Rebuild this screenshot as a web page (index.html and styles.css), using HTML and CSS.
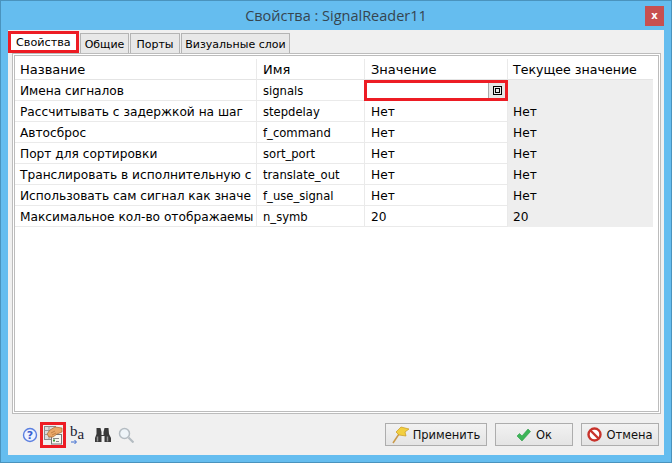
FILE: index.html
```html
<!DOCTYPE html>
<html lang="ru">
<head>
<meta charset="utf-8">
<title>Свойства : SignalReader11</title>
<link rel="stylesheet" href="styles.css">
</head>
<body>
<div class="window">
  <header class="titlebar">
    <span class="title">Свойства : SignalReader11</span>
    <button class="close" type="button">x</button>
  </header>
  <main class="client">
    <nav class="tabs">
      <span class="tab active">Свойства</span>
      <span class="tab t2">Общие</span>
      <span class="tab t3">Порты</span>
      <span class="tab t4">Визуальные слои</span>
    </nav>
    <section class="panel">
      <div class="grid">
        <div class="row head"><div class="c c1">Название</div><div class="c c2">Имя</div><div class="c c3">Значение</div><div class="c c4">Текущее значение</div></div>
        <div class="row"><div class="c c1">Имена сигналов</div><div class="c c2">signals</div><div class="c c3 editing"><span class="editor"></span><span class="dots"><svg class="ico" width="9" height="9" viewBox="0 0 9 9" shape-rendering="crispEdges"><path fill="#000" fill-rule="evenodd" d="M0 0h9v9H0ZM1 1v7h7V1Z"/><path fill="#000" fill-rule="evenodd" d="M2 2h5v5H2ZM3 3v3h3V3Z"/></svg></span></div><div class="c c4 cur"></div></div>
        <div class="row"><div class="c c1">Рассчитывать с задержкой на шаг</div><div class="c c2">stepdelay</div><div class="c c3">Нет</div><div class="c c4 cur">Нет</div></div>
        <div class="row"><div class="c c1">Автосброс</div><div class="c c2">f_command</div><div class="c c3">Нет</div><div class="c c4 cur">Нет</div></div>
        <div class="row"><div class="c c1">Порт для сортировки</div><div class="c c2">sort_port</div><div class="c c3">Нет</div><div class="c c4 cur">Нет</div></div>
        <div class="row"><div class="c c1">Транслировать в исполнительную с</div><div class="c c2">translate_out</div><div class="c c3">Нет</div><div class="c c4 cur">Нет</div></div>
        <div class="row"><div class="c c1">Использовать сам сигнал как значе</div><div class="c c2">f_use_signal</div><div class="c c3">Нет</div><div class="c c4 cur">Нет</div></div>
        <div class="row"><div class="c c1">Максимальное кол-во отображаемы</div><div class="c c2">n_symb</div><div class="c c3">20</div><div class="c c4 cur">20</div></div>
      </div>
    </section>
    <footer class="footer">
      <div class="tools">
        <svg class="ico" width="16" height="16" viewBox="0 0 16 16"><circle cx="8" cy="8" r="6.500" fill="#eef3ff" stroke="#5b7fe0" stroke-width="1.400"/><text x="8" y="12" class="q">?</text></svg>
        <span class="hl"><svg width="20" height="20" viewBox="0 0 20 20"><rect x="1.500" y="1.500" width="11" height="13" fill="#dcdcdc" stroke="#8a8a8a"/><path d="M1.500 5.500h11M1.500 9.500h11M6 1.500v13" stroke="#9a9a9a"/><rect x="8.500" y="9.500" width="10" height="9.500" fill="#f8f8f0" stroke="#777"/><path d="M10 13.500h6M13 16.500h3" stroke="#888"/><path d="M10 15.500h2" stroke="#3a9a3a" stroke-width="2"/><path d="M4 9 7 5 12 2 19 3 19 7 14 9 10 12 6 12Z" fill="#e9a868" stroke="#a8682e" stroke-width=".7"/><path d="M8 8l4-2M9 10l4-2" stroke="#a8682e" stroke-width=".6"/></svg></span>
        <span class="ba"><b>b</b>a<svg class="ba-arrow" width="8" height="5" viewBox="0 0 8 5"><path d="M0 2h5M3.500 0 5.500 2 3.500 4" fill="none" stroke="#3a6ad0"/></svg></span>
        <svg class="ico bin" width="17" height="16" viewBox="0 0 17 16"><path d="M2.500 1h4l1 4v3h2V5l1-4h4l.5 6 2 4v4h-6.500V9H7.500v6H1v-4l1.500-4Z" fill="#383838"/><path d="M3.500 9.500v5M13.500 9.500v5" stroke="#909090" stroke-width="1.500"/></svg>
        <svg class="ico mag" width="16" height="16" viewBox="0 0 16 16"><circle cx="6.500" cy="6.500" r="5" fill="#eef4f8" stroke="#b4bcc2" stroke-width="1.500"/><path d="M10.500 10.500l5 5" stroke="#b4bcc2" stroke-width="2.200"/></svg>
      </div>
      <div class="buttons">
        <button class="btn apply" type="button"><svg width="18" height="18" viewBox="0 0 18 18"><path d="M1 17 7 8" stroke="#c99a4a" stroke-width="1.500"/><path d="M4 6 9 1l8 2-4 3 1 4-7-1-3-3Z" fill="#f2cf40" stroke="#c99a20" stroke-width=".7"/></svg>Применить</button>
        <button class="btn ok" type="button"><svg width="15" height="14" viewBox="0 0 15 14"><path d="M1 8 3.500 5.500 6 8 12 1l2.500 2.500L6 13Z" fill="#3cb558" stroke="#2b9a45" stroke-width=".6"/></svg>Ок</button>
        <button class="btn cancel" type="button"><svg width="15" height="15" viewBox="0 0 15 15"><circle cx="7.500" cy="7.500" r="6" fill="#fff" stroke="#c8332c" stroke-width="2.400"/><path d="M3.500 3.500l8 8" stroke="#c8332c" stroke-width="2.400"/></svg>Отмена</button>
      </div>
    </footer>
  </main>
</div>
</body>
</html>
```
FILE: styles.css
```css
* { box-sizing: border-box; }
html, body { margin: 0; height: 100%; }
body { font: 12.200px "DejaVu Sans", sans-serif; color: #000; }
.window { width: 672px; height: 463px; background: #65bdef; border: 1px solid #4a93bd; padding: 0 7px 7px; display: flex; flex-direction: column; }
.titlebar { position: relative; height: 29px; flex: none; display: flex; align-items: center; justify-content: center; }
.title { font: 14.500px "Open Sans", sans-serif; color: #36454f; }
.close { position: absolute; right: 0; top: 5px; width: 19px; height: 20px; padding: 0; background: #c75050; border: 0; color: #fff; font: bold 10px "DejaVu Sans", sans-serif; line-height: 18px; }
.client { flex: 1; min-height: 0; background: #f0f0f0; display: flex; flex-direction: column; }
.tabs { display: flex; align-items: flex-end; height: 23px; flex: none; }
.tab { height: 20px; margin-right: 1px; background: #e8e8e8; border: 1px solid #b4b4b4; border-bottom: 0; font-size: 11px; line-height: 21px; text-align: center; white-space: nowrap; }
.t2 { width: 49px; }
.t3 { width: 50px; }
.t4 { width: 109px; }
.tab.active { height: 22px; width: 71px; background: #fff; border: 3px solid #ed1c24; padding: 0 0 0 5px; line-height: 18px; text-align: left; font-size: 11.200px; }
.panel { flex: none; height: 361px; margin: 0 3px 0 4px; background: #fff; border: 1px solid #bcbcbc; padding: 1px; }
.grid { height: 100%; padding: 3px 0 0; border: 1px solid #bcbcbc; overflow: hidden; }
.row { display: grid; grid-template-columns: 242px 108px 143px 145px; height: 21px; }
.c { padding: 0 6px; line-height: 22px; border-right: 1px solid #eaeaea; border-bottom: 1px solid #eaeaea; overflow: hidden; white-space: nowrap; }
.c1 { padding-left: 5px; padding-right: 0; }
.c2 { font-size: 11.600px; }
.c4 { padding-left: 5px; border-right: 0; }
.cur { background: #eeeeee; border-bottom-color: #eeeeee; }
.head .c { background: #fff; border-bottom: 1px solid #e4e4e4; font-size: 13px; }
.head .c4 { font-size: 12.600px; }
.editing { padding: 0; margin-left: -1px; border: 3px solid #ed1c24; display: flex; background: #fff; }
.editor { flex: 1; }
.dots { width: 17px; padding-left: 4px; background: #e6e6e6; border-left: 1px solid #aaa; display: flex; align-items: center; }
.footer { flex: 1; display: flex; align-items: center; justify-content: space-between; padding: 0 5px 0 14px; }
.tools { display: flex; align-items: center; }
.ico { display: block; flex: none; }
.q { font: bold 11px "DejaVu Sans", sans-serif; fill: #3a5fd0; text-anchor: middle; }
.hl { width: 26px; height: 26px; margin: 0 4px 0 2px; border: 3px solid #ed1c24; display: flex; align-items: center; justify-content: center; }
.ba { position: relative; font: 15px "Liberation Serif", serif; color: #223; width: 24px; }
.ba b { font-weight: normal; position: relative; top: -3px; }
.ba-arrow { position: absolute; left: 1px; top: 14px; }
.mag { margin-left: 7px; }
.buttons { display: flex; gap: 8px; }
.btn { height: 23px; display: flex; align-items: center; justify-content: center; gap: 3px; padding: 0; background: linear-gradient(#f2f2f2, #e4e4e4); border: 1px solid #adadad; font: 11.500px "DejaVu Sans", sans-serif; color: #111; }
.apply { width: 102px; }
.ok { width: 78px; gap: 5px; }
.cancel { width: 78px; gap: 4px; }
```
